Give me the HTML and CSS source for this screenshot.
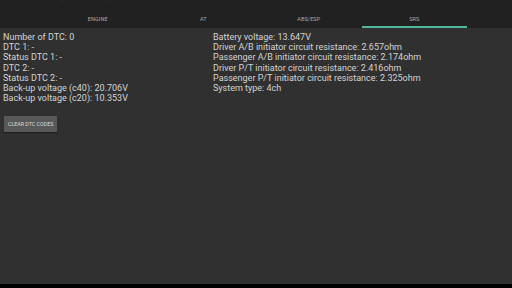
FILE: index.html
```html
<!DOCTYPE html>
<html>
<head>
<meta charset="utf-8">
<link rel="stylesheet" href="styles.css">
</head>
<body>
<div class="app">
  <div class="header">
    <div class="title">Toyota (diagnostic)</div>
    <div class="tabs">
      <div class="tab">ENGINE</div>
      <div class="tab">AT</div>
      <div class="tab">ABS/ESP</div>
      <div class="tab active">SRS</div>
    </div>
  </div>
  <div class="content">
    <div class="cols">
      <div class="col">
        <div>Number of DTC: 0</div>
        <div>DTC 1: -</div>
        <div>Status DTC 1: -</div>
        <div>DTC 2: -</div>
        <div>Status DTC 2: -</div>
        <div>Back-up voltage (c40): 20.706V</div>
        <div>Back-up voltage (c20): 10.353V</div>
      </div>
      <div class="col">
        <div>Battery voltage: 13.647V</div>
        <div>Driver A/B initiator circuit resistance: 2.657ohm</div>
        <div>Passenger A/B initiator circuit resistance: 2.174ohm</div>
        <div>Driver P/T initiator circuit resistance: 2.416ohm</div>
        <div>Passenger P/T initiator circuit resistance: 2.325ohm</div>
        <div>System type: 4ch</div>
      </div>
    </div>
    <div class="btn">CLEAR DTC CODES</div>
  </div>
  <div class="navbar"></div>
</div>
</body>
</html>
```
FILE: styles.css
```css
html, body { margin: 0; padding: 0; background: #303030; }
.app {
  width: 512px; height: 288px;
  display: flex; flex-direction: column;
  font-family: Roboto, "Noto Sans", sans-serif;
  overflow: hidden;
}
.header {
  height: 28px; background: #212121;
  position: relative;
  flex: none;
}
.title {
  position: absolute; left: 26px; top: -10px;
  font-size: 10px; line-height: 10px; color: #999;
}
.tabs {
  display: flex; padding-left: 45px; height: 28px;
}
.tab {
  width: 105.5px; box-sizing: border-box; height: 28px;
  padding-top: 16px; text-align: center;
  font-size: 5.5px; line-height: 6px; color: #a8a8a8;
  letter-spacing: 0.1px;
}
.tab.active { border-bottom: 2px solid #4db69d; }
.content {
  flex: 1; background: #303030;
  padding: 4px 3px 0 3px;
  color: #d4d4d4;
}
.cols { display: grid; grid-template-columns: 210px 1fr; }
.col { font-size: 9px; line-height: 10.2px; white-space: nowrap; }
.btn {
  display: inline-block; margin-top: 13px; margin-left: 1px;
  background: #585858; color: #dcdcdc;
  font-size: 5.3px; line-height: 16px; height: 16px;
  padding: 0 4px; border-radius: 1px;
  box-shadow: 0 1px 1px rgba(0,0,0,0.4);
}
.navbar { height: 4px; background: #000; flex: none; }
```
